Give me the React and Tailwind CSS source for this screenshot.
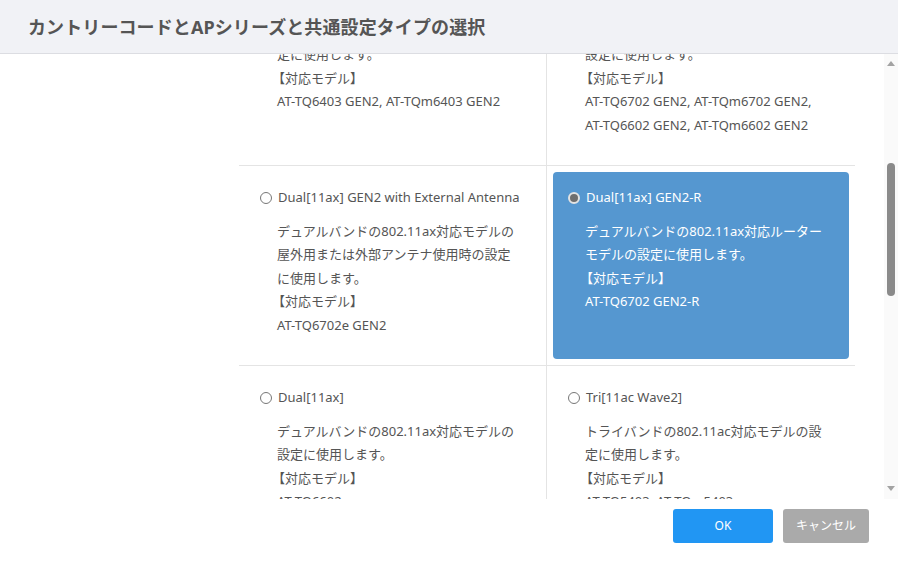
import React from "react";

const rows = [
  [
    {
      label: "Tri[11ax] GEN2",
      lines: ["トライバンドの802.11ax対応モデルの設", "定に使用します。"],
      models: ["AT-TQ6403 GEN2, AT-TQm6403 GEN2"],
    },
    {
      label: "Dual[11ax] GEN2",
      lines: ["デュアルバンドの802.11ax対応モデルの", "設定に使用します。"],
      models: ["AT-TQ6702 GEN2, AT-TQm6702 GEN2,", "AT-TQ6602 GEN2, AT-TQm6602 GEN2"],
    },
  ],
  [
    {
      label: "Dual[11ax] GEN2 with External Antenna",
      lines: [
        "デュアルバンドの802.11ax対応モデルの",
        "屋外用または外部アンテナ使用時の設定",
        "に使用します。",
      ],
      models: ["AT-TQ6702e GEN2"],
    },
    {
      label: "Dual[11ax] GEN2-R",
      lines: ["デュアルバンドの802.11ax対応ルーター", "モデルの設定に使用します。"],
      models: ["AT-TQ6702 GEN2-R"],
      selected: true,
    },
  ],
  [
    {
      label: "Dual[11ax]",
      lines: ["デュアルバンドの802.11ax対応モデルの", "設定に使用します。"],
      models: ["AT-TQ6602"],
    },
    {
      label: "Tri[11ac Wave2]",
      lines: ["トライバンドの802.11ac対応モデルの設", "定に使用します。"],
      models: ["AT-TQ5403, AT-TQm5403"],
    },
  ],
];

function Option({ item, left }) {
  const sel = item.selected;
  return (
    <div
      className={
        "h-[200px] p-[6px] border-b border-[#e4e4e4] " +
        (left ? "border-r" : "")
      }
    >
      <div
        className={
          "h-full rounded-[4px] pt-[14px] pl-[14px] " +
          (sel ? "bg-[#5597d0] text-white" : "text-[#555]")
        }
      >
        <div className="flex items-center h-[23.5px]">
          {sel ? (
            <span className="w-[12px] h-[12px] ml-[1px] rounded-full bg-[#6e6e6e] border-2 border-[#e2e2e2] shrink-0" />
          ) : (
            <span className="w-[12px] h-[12px] ml-[1px] rounded-full bg-white border border-[#777] shrink-0" />
          )}
          <span className="ml-[6px] whitespace-nowrap">{item.label}</span>
        </div>
        <div className="mt-[10px] pl-[18px] whitespace-nowrap">
          {item.lines.map((l, i) => (
            <div key={i}>{l}</div>
          ))}
          <div className="-ml-[5px]">【対応モデル】</div>
          {item.models.map((m, i) => (
            <div key={i}>{m}</div>
          ))}
        </div>
      </div>
    </div>
  );
}

export default function App() {
  return (
    <div
      className="w-[898px] h-[567px] flex flex-col bg-white overflow-hidden text-[13px] leading-[23.5px]"
      style={{ fontFamily: '"Noto Sans", "Noto Sans CJK JP", sans-serif' }}
    >
      <div className="h-[54px] shrink-0 bg-[#f1f2f6] border-b border-[#dcdde2] flex items-center pl-[28px] pt-[2px]">
        <h1 className="text-[18px] font-bold text-[#555] tracking-[0.1px]">
          カントリーコードとAPシリーズと共通設定タイプの選択
        </h1>
      </div>

      <div className="h-[445px] shrink-0 flex">
        <div className="flex-1 overflow-hidden pl-[239px] pr-[29px]">
          <div className="-mt-[88px] grid grid-cols-2">
            {rows.map((row, r) =>
              row.map((item, c) => (
                <Option key={r + "-" + c} item={item} left={c === 0} />
              ))
            )}
          </div>
        </div>
        <div className="w-[14px] shrink-0 bg-[#fafafa] flex flex-col items-center">
          <div className="h-[16px] flex items-center justify-center">
            <span className="w-0 h-0 border-l-[4px] border-r-[4px] border-b-[5px] border-l-transparent border-r-transparent border-b-[#a3a3a3] mt-[2px]" />
          </div>
          <div className="flex-1 w-full px-[3px] pt-[93px]">
            <div className="h-[133px] w-full rounded-full bg-[#8a8a8a]" />
          </div>
          <div className="h-[16px] flex items-center justify-center">
            <span className="w-0 h-0 border-l-[4px] border-r-[4px] border-t-[5px] border-l-transparent border-r-transparent border-t-[#a3a3a3] -mt-[6px]" />
          </div>
        </div>
      </div>

      <div className="flex-1 flex justify-end items-start pt-[10px] pr-[29px] gap-[10px]">
        <button className="w-[100px] h-[34px] rounded-[3px] bg-[#2196f3] text-white text-[12px]">
          OK
        </button>
        <button className="w-[86px] h-[34px] rounded-[3px] bg-[#aaaaaa] text-white text-[12px]">
          キャンセル
        </button>
      </div>
    </div>
  );
}
